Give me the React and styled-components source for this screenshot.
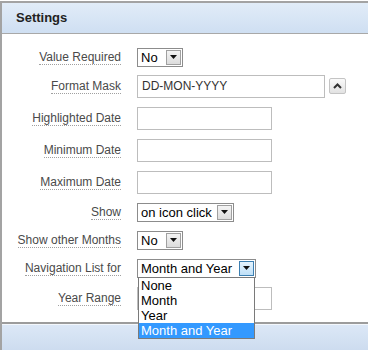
import React from "react";
import styled, { createGlobalStyle } from "styled-components";

const GlobalStyle = createGlobalStyle`
  html, body { margin: 0; padding: 0; background: #fff; }
  body { font-family: "Liberation Sans", Arial, sans-serif; }
`;

const Panel = styled.div`
  box-sizing: border-box;
  width: 368px;
  height: 349px;
  margin-top: 1px;
  border-top: 2px solid #a3a3a3;
  border-left: 2px solid #a3a3a3;
  display: flex;
  flex-direction: column;
`;

const Header = styled.div`
  box-sizing: border-box;
  height: 31px;
  border-bottom: 1px solid #a8a8a8;
  background: linear-gradient(#e1ecf8, #cfdff2);
  display: flex;
  align-items: center;
  padding-left: 14px;
  padding-bottom: 2px;
  font-size: 13px;
  font-weight: bold;
  color: #222;
`;

const Body = styled.div`
  padding: 10px 0 8px;
  display: grid;
  grid-template-columns: 119px 1fr;
  column-gap: 16px;
`;

const Row = styled.div`
  display: contents;
`;

const LabelCell = styled.div`
  height: ${(p) => p.$h}px;
  display: flex;
  align-items: center;
  justify-content: flex-end;
`;

const FieldCell = styled.div`
  height: ${(p) => p.$h}px;
  display: flex;
  align-items: center;
  gap: 3px;
`;

const Label = styled.span`
  font-size: 12px;
  line-height: 14px;
  color: #4a4a4a;
  border-bottom: 1px dotted #a0a0a0;
  white-space: nowrap;
`;

const TextBox = styled.div`
  box-sizing: border-box;
  width: ${(p) => p.$w}px;
  height: 23px;
  border: 1px solid #bdbdbd;
  background: #fff;
  font-size: 12px;
  color: #333;
  display: flex;
  align-items: center;
  padding-left: 4px;
`;

const SelectWrap = styled.div`
  position: relative;
`;

const SelectBox = styled.div`
  box-sizing: border-box;
  width: ${(p) => p.$w}px;
  height: 19px;
  border: 1px solid #8c8c8c;
  background: #fff;
  display: flex;
  align-items: center;
  justify-content: space-between;
  padding: 0 1px 0 3px;
  font-size: 13px;
  color: #000;
`;

const ArrowBtn = styled.div`
  box-sizing: border-box;
  width: 15px;
  height: 15px;
  border: 1px solid ${(p) => (p.$active ? "#3c7fb1" : "#a0a0a0")};
  background: ${(p) =>
    p.$active
      ? "linear-gradient(#e5f3fd, #bfe0f7)"
      : "linear-gradient(#f4f4f4, #dcdcdc)"};
  display: flex;
  align-items: center;
  justify-content: center;
`;

const Dropdown = styled.div`
  position: absolute;
  left: 1px;
  top: 18px;
  box-sizing: border-box;
  width: 117px;
  border: 1px solid #7a7a7a;
  background: #fff;
  z-index: 5;
`;

const Option = styled.div`
  height: 15px;
  line-height: 15px;
  padding-left: 2px;
  font-size: 13px;
  color: ${(p) => (p.$sel ? "#fff" : "#000")};
  background: ${(p) => (p.$sel ? "#3399ff" : "transparent")};
`;

const MiniBtn = styled.div`
  box-sizing: border-box;
  width: 17px;
  height: 16px;
  margin-left: 1px;
  border: 1px solid #c4c4c4;
  border-radius: 2px;
  background: linear-gradient(#fafafa, #e2e2e2);
  display: flex;
  align-items: center;
  justify-content: center;
`;

const Footer = styled.div`
  flex: 1;
  border-top: 2px solid #9c9c9c;
  box-shadow: inset 0 1px 0 #f3f7fc;
  background: linear-gradient(#dce8f7, #cddcef);
`;

const DownArrow = () => (
  <svg width="7" height="4" viewBox="0 0 7 4">
    <path d="M0 0H7L3.5 4Z" fill="#111" />
  </svg>
);

const UpCaret = () => (
  <svg width="9" height="6" viewBox="0 0 9 6">
    <path d="M1 5L4.5 1.5L8 5" fill="none" stroke="#333" strokeWidth="2" />
  </svg>
);

const Select = ({ w, value, active, children }) => (
  <SelectWrap>
    <SelectBox $w={w}>
      <span>{value}</span>
      <ArrowBtn $active={active}>
        <DownArrow />
      </ArrowBtn>
    </SelectBox>
    {children}
  </SelectWrap>
);

const Field = ({ label, h, children }) => (
  <Row>
    <LabelCell $h={h}>
      <Label>{label}</Label>
    </LabelCell>
    <FieldCell $h={h}>{children}</FieldCell>
  </Row>
);

export default function App() {
  return (
    <>
      <GlobalStyle />
      <Panel>
        <Header>Settings</Header>
        <Body>
          <Field label="Value Required" h={26}>
            <Select w={46} value="No" />
          </Field>
          <Field label="Format Mask" h={32}>
            <TextBox $w={188}>DD-MON-YYYY</TextBox>
            <MiniBtn>
              <UpCaret />
            </MiniBtn>
          </Field>
          <Field label="Highlighted Date" h={32}>
            <TextBox $w={135} />
          </Field>
          <Field label="Minimum Date" h={32}>
            <TextBox $w={135} />
          </Field>
          <Field label="Maximum Date" h={32}>
            <TextBox $w={135} />
          </Field>
          <Field label="Show" h={28}>
            <Select w={97} value="on icon click" />
          </Field>
          <Field label="Show other Months" h={28}>
            <Select w={46} value="No" />
          </Field>
          <Field label="Navigation List for" h={28}>
            <Select w={119} value="Month and Year" active>
              <Dropdown>
                <Option>None</Option>
                <Option>Month</Option>
                <Option>Year</Option>
                <Option $sel>Month and Year</Option>
              </Dropdown>
            </Select>
          </Field>
          <Field label="Year Range" h={32}>
            <TextBox $w={135} />
          </Field>
        </Body>
        <Footer />
      </Panel>
    </>
  );
}
